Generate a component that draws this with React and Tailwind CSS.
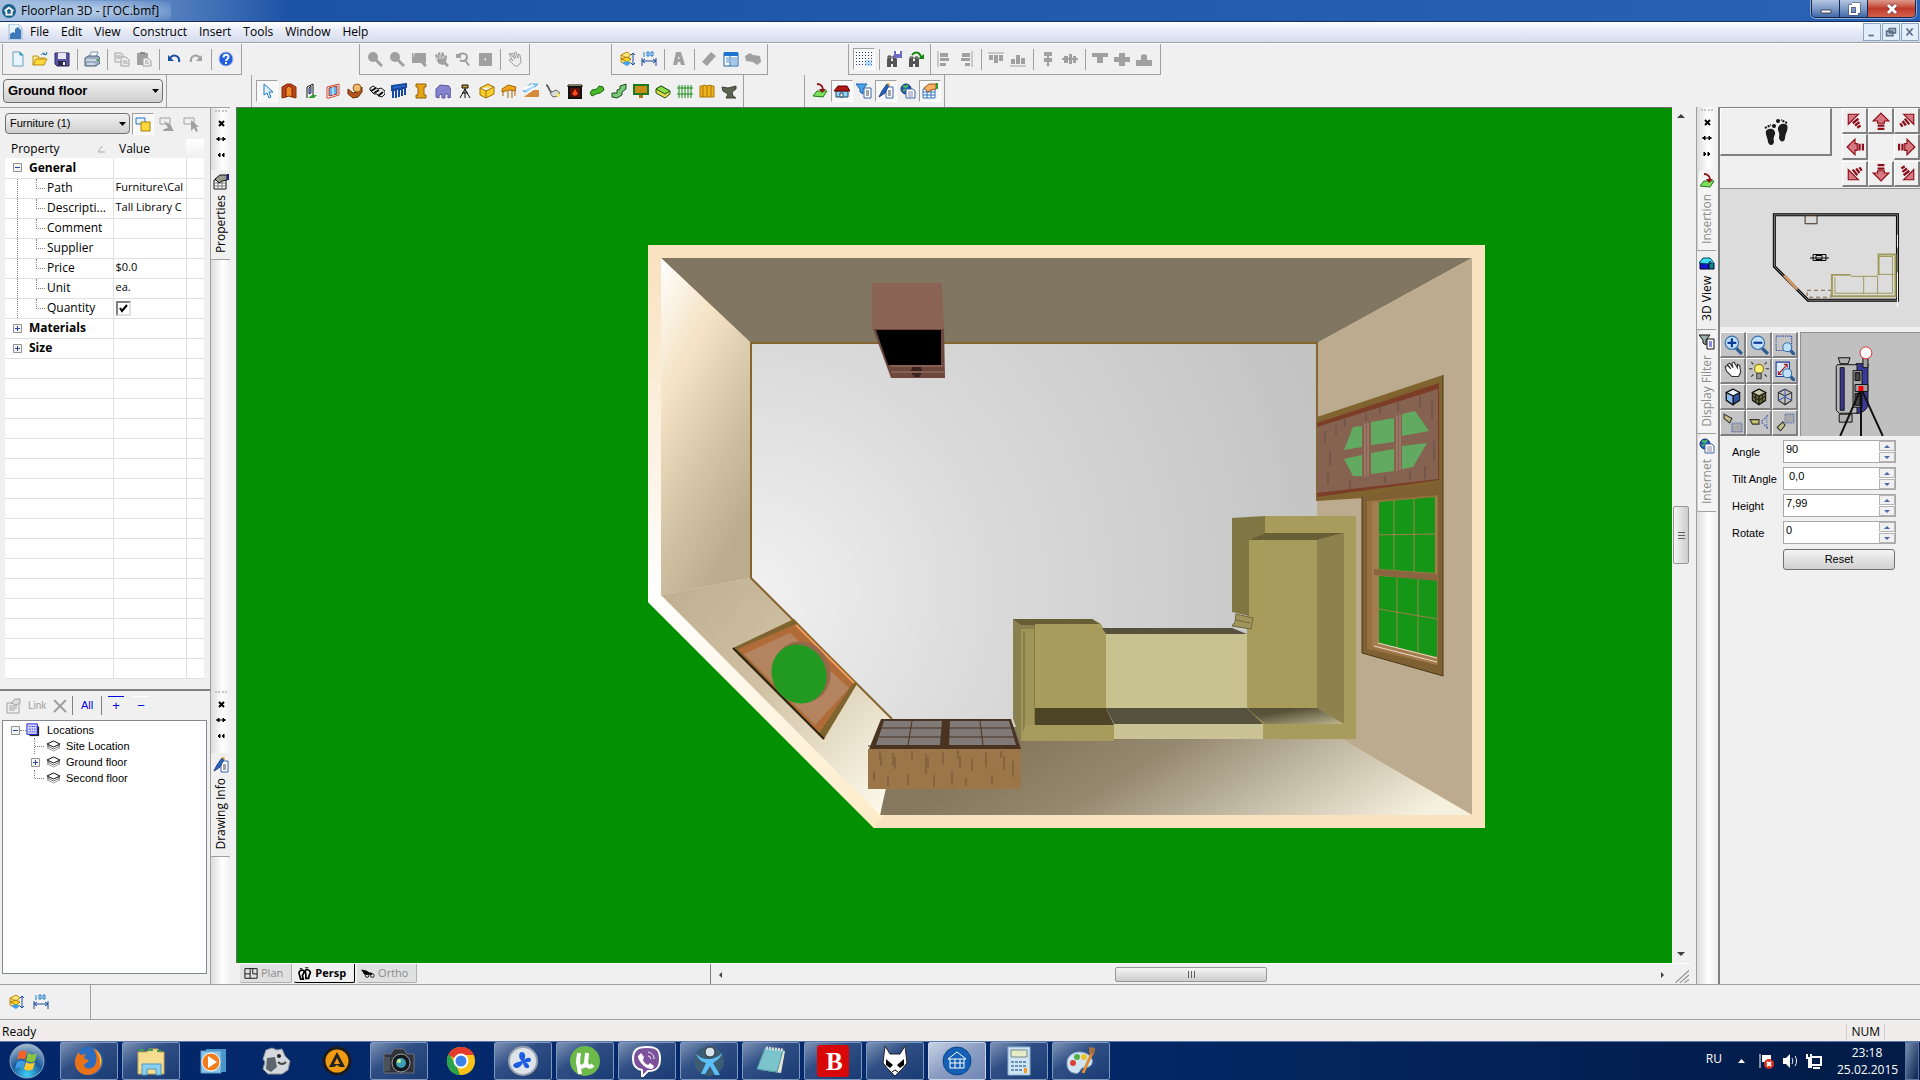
import React, { useState } from "react";

const G = "#a0a0a0";

const Svg = ({ size = "size-4", box = "0 0 16 16", children, className = "" }) => (
    <svg className={`${size} shrink-0 ${className}`} viewBox={box} fill="none">{children}</svg>
);

// Icônes des barres d'outils (grille 16 x 16)
const icons = {
    new: <><path d="M3 1h7l3 3v11H3z" fill="#e8f6ff" stroke="#6b9cbd" /><path d="M10 1v3h3" fill="#2aa5d8" stroke="#2a8fc0" /></>,
    open: <><path d="M1 14V5h5l1 2h6v2" fill="#ffe98a" stroke="#c09018" /><path d="M1 14l3-6h11l-3 6z" fill="#ffd83c" stroke="#b88a10" /><path d="M9 4c2-3 4-2 5 0m0 0l1-3m-1 3l-3-1" stroke="#1c6fb0" /></>,
    save: <><path d="M1 2h14v13H3l-2-2z" fill="#5a55a0" stroke="#2f2b66" /><path d="M4 2h8v6H4z" fill="#e8e8f4" /><path d="M4 10h8v5H4z" fill="#2c2c50" /><path d="M9 11h2v3H9z" fill="#fff" /></>,
    print: <><path d="M5 6l2-5h7l-2 5" fill="#f4faff" stroke="#8098b0" /><path d="M1 7l3-2h10l2 2v5l-4 3H1z" fill="#9aabc0" stroke="#52627a" /><path d="M2 9h10M3 13h8" stroke="#fff" /><path d="M13 9h2" stroke="#35a435" strokeWidth="2" /></>,
    copy: <><path d="M1 2h6l2 2v7H1z" fill="#eee" stroke={G} /><path d="M7 6h5l3 3v6H7z" fill="#eee" stroke={G} /><path d="M2 5h5M2 7h4M9 10h4M9 12h5" stroke={G} /></>,
    paste: <><path d="M1 2h11v12H1z" fill={G} /><path d="M7 7h5l3 3v5H7z" fill="#eee" stroke={G} /><path d="M4 1h5v2H4z" fill="#888" /><path d="M9 10h3M9 12h4" stroke={G} /></>,
    undo: <><path d="M4 7c3-4 10-3 9 4" stroke="#1a4fa0" strokeWidth="2" /><path d="M2 4v6h6z" fill="#1a4fa0" /></>,
    redo: <><path d="M12 7C9 3 2 4 3 11" stroke={G} strokeWidth="2" /><path d="M14 4v6H8z" fill={G} /></>,
    help: <><circle cx="8" cy="8" r="7" fill="#1d5fe0" stroke="#a9b8dc" /><path d="M5.500 6.500c0-4 5-3.500 5-.5 0 2-2.500 2-2.500 4M8 11v2" stroke="#fff" strokeWidth="2" /></>,
    zoomG: <><circle cx="6" cy="6" r="5" fill={G} /><path d="M9 9l6 6" stroke={G} strokeWidth="3" /></>,
    zoomWin: <><path d="M1 2h14v10H1z" fill={G} /><circle cx="8" cy="8" r="4" fill={G} /><path d="M10 10l5 5" stroke={G} strokeWidth="3" /><path d="M2 3h2M2 5h1" stroke="#eee" /></>,
    panG: <><path d="M3 8L2 4l2-1 1 2V2l2-1 1 4 1-4 2 1v4l1-2 2 1-1 6-3 3-4-1z" fill={G} /><path d="M4 6v3M7 4v4M10 5v3" stroke="#eee" /><path d="M10 10l5 5" stroke={G} strokeWidth="3" /></>,
    zoomPrev: <><path d="M3 5c2-4 9-3 9 1s-5 5-7 3" stroke={G} strokeWidth="2" /><path d="M1 3h5v4H1zM9 9h2l4 5-2 1z" fill={G} /></>,
    zoomAll: <><path d="M2 2h13v13H2z" fill={G} /><path d="M9 7v3l-2-2z" fill="#eee" /></>,
    hand: <path d="M3 2l5 6L4 3l2-1 3 5-2-5 2-1 2 6v-4l2 1 1 7-3 4H8L2 9l2-1 2 2L2 3z" stroke={G} fill="#eee" />,
    level: <><path d="M2 4l6-3 4 3-4 3z M2 4v7l6 3 4-3" stroke="#b88a10" fill="#ffe680" /><path d="M2 8l6-2 4 2-4 3z" fill="#ffd21f" stroke="#a67a08" /><path d="M3 12l5-2 4 2-4 3z" fill="#3f9ff0" /><path d="M14 2v12M12 4l2-2 2 2M12 12l2 2 2-2" stroke="#174f9e" /></>,
    dim: <><path d="M1 7v8M15 7v8M1 10h14M1 10l3-2M1 10l3 2M15 10l-3-2M15 10l-3 2" stroke="#1a4c9c" /><path d="M3 1v5M6 1h2v4H6zM10 1h2v4h-2z" stroke="#1a78d0" /></>,
    textA: <path d="M5 1h5l4 13h-4l-1-3H7l-1 3H2zM7 5v3h2z" fill={G} />,
    ruler: <path d="M1 11L10 1l5 4-9 10z" fill={G} />,
    list: <><path d="M1 2h14v13H1z" fill="#fff" stroke="#1760b0" /><path d="M1 1h14v4H1z" fill="#1f74d0" /><path d="M3 7h3M3 9h3M3 11h3M8 7h6M8 9h6M8 11h6M8 13h6" stroke="#4f8ac8" /><path d="M7 5v10" stroke="#1760b0" /></>,
    plane: <path d="M0 5l5-3 3 2 7 1 1 6-4 3-4-3-7-1z" fill={G} />,
    grid: <>{[1, 4, 7, 10, 13].map((y) => <path key={y} d={`M0 ${y}.5h16`} stroke="#2b3d60" strokeDasharray="1 2" />)}<path d="M9 9h7v6H9z" fill="#58b4ff" opacity=".4" /></>,
    find: <><path d="M1 8h4v2h2V8h4v8H7v-3H5v3H1z" fill="#555" /><path d="M2 5h3v3H2zM7 5h3v3H7z" fill="#888" stroke="#444" /><path d="M8 0h8v7H8z" fill="#6c6cc4" /><path d="M10 0h4v3h-4z" fill="#fff" /></>,
    findNext: <><path d="M1 8h4v2h2V8h4v8H7v-3H5v3H1z" fill="#555" /><path d="M2 6h3v2H2zM7 6h3v2H7z" fill="#aaa" stroke="#444" /><path d="M4 4c3-4 8-3 9 2" stroke="#14830f" strokeWidth="2" /><path d="M16 3v5h-6z" fill="#14830f" /></>,
    alL: <><path d="M2 0v16" stroke={G} /><path d="M4 2h8v4H4zM4 7h9v3H4zM4 12h6v3H4z" fill={G} /></>,
    alR: <><path d="M14 0v16" stroke={G} /><path d="M4 2h8v4H4zM3 7h9v3H3zM7 12h5v3H7z" fill={G} /></>,
    alT: <><path d="M0 2h16" stroke={G} /><path d="M1 4h4v5H1zM6 4h4v8H6zM11 4h4v6h-4z" fill={G} /></>,
    alB: <><path d="M0 15h16" stroke={G} /><path d="M1 8h4v5H1zM6 4h4v9H6zM11 7h4v6h-4z" fill={G} /></>,
    ceV: <path d="M4 1h8v4H9v2h3v4H9v2h1l-2 3-2-3h1v-2H4V7h3V5H4z" fill={G} />,
    ceH: <path d="M0 7h2V5h4v2h1V3h3v4h1V5h3v2h2v2h-2v3h-3V9h-1v4H7V9H6v3H2V9H0z" fill={G} />,
    exT: <path d="M0 2h16v4h-5v6H5V6H0z" fill={G} />,
    exM: <path d="M5 2h6v4h5v5h-5v4H5v-4H0V6h5z" fill={G} />,
    exB: <path d="M5 4h2V3h2v1h2v5h5v6H0V9h5z" fill={G} />,
    cursor: <path d="M5 1v11l3-2 2 5 2-1-2-5h4z" fill="#dff0ff" stroke="#1f7bc0" />,
    door: <><path d="M1 4l5-3h4l5 3v11l-4-1V5L8 3 5 5v9l-4 1z" fill="#b8441a" stroke="#8a2b08" /><path d="M5 5l3-2 3 2v9l-3-1-3 1z" fill="#f08a28" stroke="#8a2b08" /></>,
    door2: <><path d="M4 15V4l6-3v14" fill="#fff" stroke="#111" /><path d="M6 5l2-2v7l-2 1z" fill="#7cc8ff" stroke="#224" /><path d="M5 15l4-3h5l-3 3z" fill="#2ea22e" /></>,
    window: <><path d="M2 4l12-3v11L4 15H2z" fill="#fff" stroke="#d0452a" /><path d="M4 5l8-2v8l-8 2z" fill="#5fb4f4" stroke="#b03018" /><path d="M8 4v8" stroke="#fff" /></>,
    shape: <><path d="M1 6l5 4 5-1 4-5v5l-4 5-5 1-5-4z" fill="#b4561c" stroke="#6a2a08" /><circle cx="10" cy="5" r="4" fill="#f0bc6c" stroke="#9a5a1c" /></>,
    stairs: <><path d="M1 5l3-2 5 3 3-1 4 3v3l-3 3-3-1-2-2-3 0-4-4z" fill="#e8e8e8" stroke="#111" /><path d="M2 8l5-3M5 10l5-3M9 13l5-4" stroke="#111" strokeWidth="2" /></>,
    rail: <path d="M1 3l14-2v3L1 7zM2 6v9M5 6v9M8 5v9M11 5v8M14 4v8" fill="#2f6fd0" stroke="#1749a0" strokeWidth="2" />,
    column: <path d="M3 1h10v3h-2v8h2v3H3v-3h2V4H3z" fill="#e6a416" stroke="#8e6208" />,
    roof: <path d="M1 6l4-4 9 1 2 4v7l-3 1v-4h-3v4H7v-4l-3 1v3l-3-1z" fill="#8484d0" stroke="#5656a0" />,
    tripod: <path d="M5 2h6v3H5zM8 5v10M8 6L3 15M8 6l5 9M5 10h6" stroke="#111" fill="#c8a030" />,
    cabinet: <path d="M1 5l8-4 6 3v7l-8 4-6-3zM1 5l6 3 8-4M7 8v7" fill="#ffcf2e" stroke="#9a6f08" />,
    chair: <path d="M1 6l6-4 8 2-1 4-6-1-7 2zM2 8v5M7 8v7M11 7v8M14 7v6" fill="#f0a41c" stroke="#a56808" strokeWidth="1" />,
    floor: <><path d="M0 8L7 1h8L6 10z" fill="#a8d8f8" stroke="#58a8e0" /><path d="M1 14l8-7h7v7z" fill="#d88a3c" /><path d="M1 6l9-4M3 11l9-6" stroke="#fff" strokeWidth="2" /></>,
    lamp: <><path d="M1 2c3 0 3 8 7 8" stroke="#666" strokeWidth="2" /><path d="M5 10l6-3 4 3-2 3-5 1z" fill="#ddd" stroke="#666" /><circle cx="13" cy="12" r="2" fill="#f4e16a" /></>,
    fire: <><path d="M1 2h14v2H1z" fill="#ffe8a0" stroke="#111" /><path d="M2 4h12v11H2z" fill="#5a0e08" stroke="#111" strokeWidth="2" /><path d="M8 6l3 5-3 2-3-2z" fill="#ff4a1a" /></>,
    bush: <path d="M1 10l2-3 5-1 2-3 4 1 1 3-4 3-4 1-4 2z" fill="#48b828" stroke="#1d6a10" />,
    stair2: <path d="M1 14v-4h5V7l3-1V3l6-2v5l-4 3v3l-5 3z" fill="#78c878" stroke="#204f20" />,
    sign: <><path d="M1 2h14v9H1z" fill="#c88c18" stroke="#1e7a1e" strokeWidth="2" /><path d="M6 12h4v3H6z" fill="#b07818" /></>,
    bed: <><path d="M1 6l5-3 9 5v3l-5 4-9-5z" fill="#e8d850" stroke="#1c5a10" /><path d="M1 6l5-3 9 5-5 3z" fill="#8ddc48" stroke="#1c5a10" /></>,
    fence: <path d="M0 5h16M0 11h16M2 2v13M5 2v13M8 2v13M11 2v13M14 2v13" stroke="#1a8c1a" />,
    gate: <path d="M1 3h2l2-1 3 1 3-1 2 1h2v11H1zM4 3v11M8 3v11M12 3v11" fill="#f0b41c" stroke="#a87408" />,
    terrain: <path d="M1 4l6 1 8-2v3l-4 3 1 4 3 2H5l2-4-5-3z" fill="#5c6450" stroke="#3c4434" />,
    insert: <><path d="M1 13l4-5h10l-4 6z" fill="#7ee05a" stroke="#1c7a1c" /><path d="M5 1c4 0 6 3 6 6" stroke="#8c1414" strokeWidth="2" /><path d="M7 6h7l-4 4z" fill="#8c1414" /></>,
    house: <><path d="M2 8h12v6H2z" fill="#8cd4f8" stroke="#246" /><path d="M0 8l4-5h9l3 5z" fill="#b01818" stroke="#600" /><path d="M6 10h3v4H6z" fill="#fff" stroke="#246" /></>,
    house3d: <><path d="M1 8h9v6H1z" fill="#1414c8" stroke="#003" /><path d="M10 8h5v6h-5z" fill="#148484" stroke="#003" /><path d="M0 8l4-5h7l4 5-2 1-2-3-2 3z" fill="#3ce0f0" stroke="#046" /></>,
    filterBw: <><path d="M0 1h11L7 6v5L4 9V6z" fill="#9ab0a8" stroke="#111" /><path d="M8 5h7v10H8z" fill="#fff" stroke="#111" /><path d="M10 8h3M10 10h3M10 12h3" stroke="#1414c8" /></>,
    filter: <><path d="M0 1h11L7 6v5L4 9V6z" fill="#4aa4ee" stroke="#1a62b0" /><path d="M8 5h7v10H8z" fill="#fff" stroke="#3a62a8" /><path d="M10 8h3M10 10h3M10 12h3" stroke="#445" /></>,
    brush: <><path d="M8 4h7v11H8z" fill="#fff" stroke="#3a62a8" /><path d="M10 8h3M10 10h3M10 12h3" stroke="#445" /><path d="M1 14l3-6 5-7 2 1-4 8z" fill="#2a66c4" stroke="#183c80" /><path d="M9 1l1-1 2 1-1 2z" fill="#f09a20" /></>,
    globe: <><circle cx="6" cy="6" r="5" fill="#2456c0" stroke="#143074" /><path d="M3 3l3 1 2-2M3 8l3-2" stroke="#4cc04c" strokeWidth="2" /><path d="M6 6h7l2 2v7H6z" fill="#fff" stroke="#3a62a8" /><path d="M8 9h5M8 11h5M8 13h5" stroke="#88a" /></>,
    props: <><path d="M1 6h12v9H1z" fill="#fff" stroke="#2f72c0" /><path d="M1 9h12M1 12h12M5 6v9M9 6v9" stroke="#2f72c0" /><path d="M2 5l5-4h7v5l-5 1-3 2z" fill="#f4b064" stroke="#a0521c" /><path d="M15 0v6" stroke="#2e9a2e" strokeWidth="2" /></>,
    propsBw: <><path d="M1 6h12v9H1z" fill="#fff" stroke="#111" /><path d="M1 9h12M1 12h12M5 6v9M9 6v9" stroke="#777" /><path d="M2 5l5-4h7v5l-5 1-3 2z" fill="#9a9a8c" stroke="#111" /><path d="M15 0v6" stroke="#1c1c8c" strokeWidth="2" /></>,
};

function Tool({ name, pressed, wide }) {
    return (
        <button
            type="button"
            aria-label={name}
            className={`flex h-[22px] ${wide ? "w-[25px]" : "w-[22px]"} shrink-0 items-center justify-center ${pressed ? "border border-[#a0a0a0] border-r-white border-b-white bg-[#f8f8f8]" : ""}`}
        >
            <Svg>{icons[name]}</Svg>
        </button>
    );
}

// "|" place un séparateur, "*" indique un bouton enfoncé
function ToolGroup({ items, className }) {
    return (
        <div className={`flex shrink-0 items-center border-r border-[#a0a0a0] ${className}`}>
            {items.split(" ").map((it, i) =>
                it === "|" ? (
                    <span key={i} className="flex w-2 shrink-0 justify-center"><span className="h-[21px] border-l border-[#a0a0a0]" /></span>
                ) : (
                    <Tool key={i} name={it.replace("*", "")} pressed={it.includes("*")} />
                )
            )}
        </div>
    );
}

function Combo({ value, className, label }) {
    return (
        <div className={`relative ${className}`}>
            <select aria-label={label} className="size-full appearance-none rounded-sm border border-[#707070] bg-linear-to-b from-[#f2f2f2] to-[#cfcfcf] pl-1">
                <option>{value}</option>
            </select>
            <svg className="pointer-events-none absolute top-1/2 right-1 h-1 w-[7px] -translate-y-1/2" viewBox="0 0 7 4"><path d="M0 0h7L3.500 4z" fill="#000" /></svg>
        </div>
    );
}

function TitleBar() {
    return (
        <header className="flex h-[21px] shrink-0 items-center bg-linear-to-r from-[#a5c0e0] via-[#1b53a6] via-15% to-[#2a62b4] pl-[2px]">
            <div className="flex items-center gap-[5px] bg-radial from-[#b9cfe8] to-transparent pr-3">
                <Svg size="size-[14px]"><circle cx="8" cy="8" r="8" fill="#1f628e" /><path d="M3 8l5-4 5 4M5 8v4h6V8" stroke="#fff" strokeWidth="2" /></Svg>
                <h1 className="text-[12px] leading-5 text-black">FloorPlan 3D - [ГОС.bmf]</h1>
            </div>
            <div className="mr-1 ml-auto flex h-[18px] self-start overflow-hidden rounded-b-[5px] border border-t-0 border-[#16284e] ring-1 ring-[#8aa9d6]">
                <button type="button" aria-label="Minimize" className="flex w-7 items-center justify-center border-r border-[#16284e] bg-linear-to-b from-[#b4c6e2] via-[#7f9bc8] via-50% to-[#4168a8]">
                    <Svg size="h-4 w-4"><path d="M3 9h10v3H3z" fill="#fff" stroke="#445" /></Svg>
                </button>
                <button type="button" aria-label="Restore" className="flex w-7 items-center justify-center border-r border-[#16284e] bg-linear-to-b from-[#b4c6e2] via-[#7f9bc8] via-50% to-[#4168a8]">
                    <Svg size="h-4 w-4"><path d="M6 3h7v8h-2M4 5h7v8H4z" stroke="#445" strokeWidth="3" /><path d="M6 3h7v8h-2M4 5h7v8H4z" stroke="#fff" strokeWidth="2" /></Svg>
                </button>
                <button type="button" aria-label="Close" className="flex w-[47px] items-center justify-center bg-linear-to-b from-[#dc9a8c] via-[#c0392a] via-50% to-[#d2604a]">
                    <Svg size="h-4 w-4"><path d="M4 4l8 8M12 4l-8 8" stroke="#533" strokeWidth="4" /><path d="M4 4l8 8M12 4l-8 8" stroke="#fff" strokeWidth="3" /></Svg>
                </button>
            </div>
        </header>
    );
}

function MenuBar() {
    return (
        <nav className="flex h-[22px] shrink-0 items-center border-t border-b border-t-[#1b2f5c] border-b-[#a0a0a0] bg-linear-to-b from-white via-[#e9edf7] via-40% to-[#d6dcee] pl-2">
            <Svg className="mr-[6px]"><path d="M1 0h9l4 4v12H1z" fill="#e8f2fc" stroke="#9ab4d4" /><path d="M2 15V10l3-2 2 1V5l3-2 3 3v9z" fill="#3d78b8" /></Svg>
            {["File", "Edit", "View", "Construct", "Insert", "Tools", "Window", "Help"].map((m) => (
                <button type="button" key={m} className="mr-3 text-[12px] leading-5">{m}</button>
            ))}
            <div className="mr-[1px] ml-auto flex gap-[1px]">
                {["M4 12h6", "M6 4h7v5H6zM3 7h7v5H3z", "M4 4l7 8M11 4l-7 8"].map((d, i) => (
                    <button type="button" key={d} aria-label={["Minimize drawing", "Restore drawing", "Close drawing"][i]} className="flex h-[18px] w-[18px] items-center justify-center border border-[#8ea3bd] bg-[#e2eefa]">
                        <Svg size="size-[14px]"><path d={d} stroke="#5c7088" strokeWidth="2" /></Svg>
                    </button>
                ))}
            </div>
        </nav>
    );
}

function StripButtons({ right }) {
    const ds = ["M6 6l5 5M11 6l-5 5", "M3 8h10M6 6L4 8l2 2zM10 6l2 2-2 2z", right ? "M5 6l2 2-2 2zM9 6l2 2-2 2z" : "M7 6L5 8l2 2zM11 6L9 8l2 2z"];
    return (
        <div className="flex flex-col items-center">
            <span className="mt-[2px] h-[2px] w-3 border-t-2 border-dotted border-[#c4c4c4]" />
            <div className="flex flex-col pt-[3px] pb-[3px]">
                {ds.map((d, i) => (
                    <button type="button" key={d} aria-label={["Close", "Resize", "Collapse"][i]}><Svg><path d={d} stroke="#000" strokeWidth={i === 0 ? 2 : 1} fill={i === 0 ? "none" : "#000"} /></Svg></button>
                ))}
            </div>
        </div>
    );
}

function SideTab({ icon, label, active, className }) {
    return (
        <button type="button" className={`flex w-full flex-col items-center border-b border-[#a0a0a0] pt-1 text-[12px] leading-5 ${active ? "bg-[#f0f0f0] text-black" : "rounded-tl-md border-l border-l-[#d0d0d0] bg-[#f4f4f4] text-[#8c8c8c]"} ${className}`}>
            <Svg>{icons[icon]}</Svg>
            <span className="mt-[5px] rotate-180 whitespace-nowrap [writing-mode:vertical-rl]">{label}</span>
        </button>
    );
}

const strip = "w-5 shrink-0 border-l border-[#a0a0a0] bg-linear-to-r from-[#dcdcdc] via-white via-60% to-[#f0f0f0]";

const rows = [
    { name: "General", head: true, open: true },
    { name: "Path", value: "Furniture\\Cal" },
    { name: "Descripti...", value: "Tall Library C" },
    { name: "Comment" },
    { name: "Supplier" },
    { name: "Price", value: "$0.0" },
    { name: "Unit", value: "ea." },
    { name: "Quantity", check: true },
    { name: "Materials", head: true },
    { name: "Size", head: true },
    ...Array.from({ length: 16 }, () => ({})),
];

const Box = ({ open }) => (
    <svg className="size-[9px] shrink-0" viewBox="0 0 9 9"><path d="M.5.5h8v8h-8z" fill="#f4f4f4" stroke="#919191" /><path d={open ? "M2 4.500h5" : "M2 4.500h5M4.500 2v5"} stroke="#26479c" /></svg>
);

function PropertiesPanel() {
    const [quantity, setQuantity] = useState(true);

    return (
        <section className="flex min-h-0 flex-1">
            <div className="min-w-0 flex-1 overflow-hidden pr-[6px] pl-[5px]">
                <div className="flex h-[31px] items-center">
                    <Combo label="Object type" value="Furniture (1)" className="h-[21px] w-[125px] font-['Liberation_Sans',sans-serif] text-[11px]" />
                    <div className="ml-[2px] flex gap-[2px]">
                        <button type="button" aria-label="Link view" className="flex size-[22px] items-center justify-center border border-[#a0a0a0] border-r-white border-b-white bg-[#f8f8f8]">
                            <Svg><path d="M1 2h9v6H1z" fill="#e8f4ff" stroke="#2a72c0" /><path d="M6 6h9v9H6z" fill="#ffd83c" stroke="#a88008" /></Svg>
                        </button>
                        <button type="button" aria-label="Apply" className="flex size-[22px] items-center justify-center"><Svg><path d="M1 2h10v6H1z" stroke={G} /><path d="M5 5l7 4 1 3 2 3H4l1-2 4-1z" fill={G} /></Svg></button>
                        <button type="button" aria-label="Pick" className="flex size-[22px] items-center justify-center"><Svg><path d="M1 2h10v6H1z" stroke={G} /><path d="M8 4v11l3-3 2 4 2-1-2-4h3z" fill={G} /></Svg></button>
                    </div>
                </div>
                <table className="w-full table-fixed border-collapse bg-white text-[12px] leading-[18px]">
                    <thead>
                        <tr className="h-[19px] bg-[#f0f0f0] text-left">
                            <th className="w-[108px] p-0 pl-[6px] font-normal"><span className="flex items-center justify-between pr-2">Property <svg className="h-2 w-[7px]" viewBox="0 0 7 8"><path d="M0 7l4-6M0 7h7" stroke="#aaa" fill="none" /></svg></span></th>
                            <th className="w-[73px] p-0 pl-[6px] font-normal">Value</th>
                            <th aria-label="More" className="bg-linear-to-b from-white to-[#f0f0f0] p-0" />
                        </tr>
                    </thead>
                    <tbody>
                        {rows.map((r, i) => (
                            <tr key={i} className="h-5 border-b border-[#e0e0e0]">
                                <td className="border-r border-[#e0e0e0] p-0">
                                    {r.head && (
                                        <div className="flex items-center gap-[7px] pl-2 font-bold"><Box open={r.open} />{r.name}</div>
                                    )}
                                    {r.name && !r.head && (
                                        <div className="flex pl-3">
                                            <span className="h-[19px] w-[19px] border-l border-dotted border-[#808080]" />
                                            <span className="h-[10px] w-[9px] border-b border-l border-dotted border-[#808080]" />
                                            <span className="pl-[2px] whitespace-nowrap">{r.name}</span>
                                        </div>
                                    )}
                                </td>
                                <td className="border-r border-[#e0e0e0] p-0 pl-[2px]">
                                    {r.check ? (
                                        <div className="relative size-[15px]">
                                            <input type="checkbox" aria-label="Quantity" checked={quantity} onChange={(e) => setQuantity(e.target.checked)} className="block size-[15px] appearance-none border-2 border-[#808080] border-r-[#e0e0e0] border-b-[#e0e0e0] bg-white" />
                                            {quantity && <svg className="pointer-events-none absolute inset-0" viewBox="0 0 15 15"><path d="M4 7l2 3 5-6" stroke="#000" strokeWidth="2" fill="none" /></svg>}
                                        </div>
                                    ) : (
                                        <div className="h-[19px] text-[11px] leading-4 whitespace-nowrap">{r.value}</div>
                                    )}
                                </td>
                                <td className="p-0" />
                            </tr>
                        ))}
                    </tbody>
                </table>
            </div>
            <div className={strip}>
                <StripButtons />
                <SideTab icon="propsBw" label="Properties" active className="mt-1 h-[90px]" />
            </div>
        </section>
    );
}

const Layers = () => (
    <Svg size="h-3 w-[15px]" box="0 0 15 12"><path d="M1 8l6.500-3L14 8l-6.500 3z" fill="#fff" stroke="#aaa" /><path d="M1 6l6.500-3L14 6 7.500 9z" fill="#fff" stroke="#777" /><path d="M1 4l6.500-3L14 4 7.500 7z" fill="#fff" stroke="#111" /></Svg>
);

function DrawingInfo() {
    return (
        <section className="flex h-[295px] shrink-0">
            <div className="flex min-w-0 flex-1 flex-col border-t-2 border-[#808080] pr-[3px] pb-[10px] pl-[2px]">
                <div className="flex h-[29px] shrink-0 items-center font-['Liberation_Sans',sans-serif] text-[11px]">
                    <button type="button" aria-label="Edit" className="ml-1"><Svg><path d="M1 5h12v10H1zM3 8h8M3 10h8M3 12h6" stroke={G} /><path d="M5 5l4-4h5v4l-4 2z" fill="#ddd" stroke={G} /></Svg></button>
                    <button type="button" className="ml-[6px] w-[18px] text-[10px] text-[#a0a0a0]">Link</button>
                    <button type="button" aria-label="Delete" className="ml-[6px]"><Svg><path d="M2 2l12 12M14 2L2 14" stroke={G} strokeWidth="2" /></Svg></button>
                    <span className="ml-1 h-[19px] border-l border-[#808080]" />
                    <button type="button" className="ml-[7px] w-[14px] text-[11px] text-[#0000e0]">All</button>
                    <span className="ml-[7px] h-[19px] border-l border-[#808080]" />
                    <button type="button" className="ml-[6px] h-[19px] w-4 border-t border-[#0000e0] text-[13px] leading-4 text-[#0000e0]">+</button>
                    <button type="button" className="ml-[9px] h-[19px] w-4 border-t border-white text-[13px] leading-4 text-[#0000e0]">−</button>
                </div>
                <ul className="flex-1 border border-[#828790] bg-white pt-[1px] pl-2 font-['Liberation_Sans',sans-serif] text-[11px] leading-4">
                    <li>
                        <div className="flex items-center">
                            <Box open />
                            <span className="w-[6px] border-t border-dotted border-[#808080]" />
                            <Svg size="size-[14px]" className="mr-[7px]"><path d="M4 4h11v11H4z" fill="#222" /><path d="M1 1h12v12H1z" fill="#d4d4ff" stroke="#1414d0" /><path d="M3 4h9M3 7h9M3 10h9" stroke="#1414d0" strokeDasharray="1 1" /></Svg>
                            Locations
                        </div>
                        <ul className="ml-[19px]">
                            {["Site Location", "Ground floor", "Second floor"].map((t, i) => (
                                <li key={t} className="flex items-center">
                                    <span className={`w-[5px] ${i === 2 ? "h-2 self-start" : "h-4"} ${i === 1 ? "border-0" : "border-r border-dotted border-[#808080]"}`} />
                                    {i === 1 ? <span className="flex w-[9px] -translate-x-1"><Box /></span> : <span className="w-[9px] border-t border-dotted border-[#808080]" />}
                                    <span className="mr-[5px] flex pl-[2px]"><Layers /></span>
                                    {t}
                                </li>
                            ))}
                        </ul>
                    </li>
                </ul>
            </div>
            <div className={strip}>
                <StripButtons />
                <SideTab icon="brush" label="Drawing Info" active className="mt-[6px] h-[104px]" />
            </div>
        </section>
    );
}

const grain = "M12 2v9M13 7v10M25 4v13M27 8v12M44 2v8M58 5v20M60 9v9M75 3v12M90 1v9M92 7v12M104 10v12M118 3v15M133 2v7M136 7v14M145 12v16M6 22v10M20 28v9M40 25v11M66 26v12M84 22v14M98 29v8M124 26v9";

function Scene() {
    return (
        <svg className="absolute inset-0 size-full bg-[#009000]" viewBox="237 107 1435 855">
            <defs>
                <linearGradient id="rimL" x1="0" y1="0" x2="0" y2="1">
                    <stop offset="0" stopColor="#f9e2c0" /><stop offset="1" stopColor="#fff" />
                </linearGradient>
                <linearGradient id="rimD" x1="0" y1="0" x2="1" y2="1">
                    <stop offset="0" stopColor="#fff" /><stop offset="1" stopColor="#fdebc6" />
                </linearGradient>
                <linearGradient id="left" x1="0" y1="0" x2=".5" y2="1">
                    <stop offset="0" stopColor="#fff" /><stop offset=".35" stopColor="#f4e3c4" /><stop offset=".7" stopColor="#d2c3a5" /><stop offset="1" stopColor="#bcac8e" />
                </linearGradient>
                <linearGradient id="diag" x1="0" y1="0" x2="1" y2="1">
                    <stop offset="0" stopColor="#bfae90" /><stop offset=".45" stopColor="#d0c1a4" /><stop offset="1" stopColor="#fffdee" />
                </linearGradient>
                <linearGradient id="bottom" gradientUnits="userSpaceOnUse" x1="1040" y1="730" x2="1180" y2="960">
                    <stop offset="0" stopColor="#85785f" /><stop offset=".3" stopColor="#94886f" /><stop offset="1" stopColor="#f6f1de" />
                </linearGradient>
                <radialGradient id="floor" gradientUnits="userSpaceOnUse" cx="755" cy="590" r="600">
                    <stop offset="0" stopColor="#f1f1f1" /><stop offset=".4" stopColor="#dadada" /><stop offset="1" stopColor="#c2c2c2" />
                </radialGradient>
                <linearGradient id="fold" x1="0" y1="0" x2="1" y2="1">
                    <stop offset=".3" stopColor="#59523a" /><stop offset="1" stopColor="#bcb58c" />
                </linearGradient>
            </defs>

            {/* Murs */}
            <path d="M648 244H1485V827H874L648 601z" fill="#f9e2c0" />
            <path d="M648 257h13V600h-13z" fill="url(#rimL)" />
            <path d="M648 601V594H661L884 814 874 827z" fill="url(#rimD)" />
            <path d="M661 257H1472L1317 342H751z" fill="#817661" />
            <path d="M1472 257V814L1317 724V342z" fill="#bcab8e" />
            <path d="M880 814H1472L1317 724H892z" fill="url(#bottom)" />
            <path d="M661 257L751 342V577L661 594z" fill="url(#left)" />
            <path d="M661 594L751 577 892 718V760L880 814z" fill="url(#diag)" />
            <path d="M751 342H1317V726H900L751 577z" fill="url(#floor)" />
            <path d="M1317 500V342H751V577L892 718" fill="none" stroke="#866630" strokeWidth="2" />

            {/* Bibliothèque */}
            <path d="M873 328H944L945 377H891z" fill="#6f483d" />
            <path d="M872 282H942L944 328H872z" fill="#8a6355" />
            <path d="M876 329H941V364H888z" />
            <path d="M890 365H943M891 371H944" stroke="#a07468" />
            <path d="M912 367h9M911 369h11M912 373h9M914 375h6" stroke="#000" fill="none" />

            {/* Porte de droite */}
            <path d="M1317 416L1443 374V492L1317 500z" fill="#80642f" />
            <path d="M1317 422L1439 382V479L1317 496z" fill="#7b3c28" />
            <path d="M1317 426L1438 388V478L1317 492z" fill="#866350" />
            <path d="M1325 430v12M1330 450v15M1336 425v9M1345 418v8M1350 480v8M1366 412v8M1380 406v7M1398 402v8M1420 395v12M1432 400v18M1434 440v20M1385 475v7M1410 470v8M1328 472v12M1425 465v12" stroke="#75564a" strokeWidth="2" />
            <path d="M1365 423V476M1368 422V475M1397 415V470M1400 414V469" stroke="#b28a78" />
            <path d="M1353 426L1362 425V446L1344 449zM1371 421L1394 417V441L1371 444zM1402 413L1415 410 1429 430 1402 435zM1344 458L1362 454V475H1353zM1371 452L1394 448V470L1371 473zM1402 445L1427 442 1413 466 1402 468z" fill="#62aa62" />

            {/* Fenêtre */}
            <path d="M1362 496L1443 481V675L1362 652z" fill="#7e6032" />
            <path d="M1367 500L1438 494V664L1367 648z" fill="#96703f" />
            <path d="M1372 501L1437 496V664L1372 646z" fill="#a47c50" />
            <path d="M1379 501L1435 496V572L1379 568zM1379 575L1437 579V656L1379 642z" fill="#169616" />
            <path d="M1394 500V569M1414 498V571M1373 534L1435 533M1397 577V646M1418 578V651M1379 608L1437 618" stroke="#a08050" />
            <path d="M1374 568L1437 573V580L1374 574z" fill="#8a6640" />
            <path d="M1374 645L1437 661M1378 642L1437 657" stroke="#eadcc4" />
            <path d="M1362 652L1443 675V374M1362 496V652" stroke="#4a381a" fill="none" />

            {/* Porte de la cloison oblique */}
            <path d="M733 647L794 618 857 683 824 738z" fill="#80642f" />
            <path d="M738 648L796 623 854 681 819 732z" fill="#b06c38" />
            <path d="M744 653L790 632 849 687 815 724z" fill="#b48460" />
            <path d="M733 647L824 738" stroke="#2c2008" strokeWidth="2" />
            <path d="M796 624L854 682" stroke="#f09c58" strokeWidth="2" />
            <ellipse cx="802" cy="671" rx="28" ry="31" transform="rotate(-25 802 671)" fill="#946848" />
            <ellipse cx="799" cy="673" rx="27" ry="30" transform="rotate(-25 799 673)" fill="#229a22" />

            {/* Canapé d'angle */}
            <path d="M1013 618H1092L1101 623V628H1021V740L1013 718z" fill="#8a8150" />
            <path d="M1013 618H1092L1101 624H1021z" fill="#665f36" />
            <path d="M1021 628H1035V740H1021z" fill="#a1965a" />
            <path d="M1024 630V738M1035 624V723" stroke="#6f673c" />
            <path d="M1035 623H1101L1106 633V707H1035z" fill="#a89c5c" />
            <path d="M1035 707H1106L1114 724H1035z" fill="#4e4526" />
            <path d="M1025 724H1114V740H1021z" fill="#a89c5c" />
            <path d="M1102 627H1232L1247 633H1106z" fill="#55513d" />
            <path d="M1106 633H1247V707H1106z" fill="#c8c190" />
            <path d="M1106 707H1247L1265 723H1114z" fill="#57523e" />
            <path d="M1114 723H1265V738H1114z" fill="#cac395" />
            <path d="M1265 515H1356V738H1263V723L1247 707V539z" fill="#a89c5c" />
            <path d="M1232 517L1265 515V532L1249 539V615L1232 611z" fill="#7f7644" />
            <path d="M1265 532H1344L1317 539H1249z" fill="#685f36" />
            <path d="M1317 539L1344 532V723L1317 707z" fill="#8d824e" />
            <path d="M1247 707H1317L1344 723H1265z" fill="url(#fold)" />
            <path d="M1236 613l17 4-2 11-19-3 3-4z" fill="#a0955a" stroke="#6f673c" />
            <path d="M1236 619l14 3" stroke="#6f673c" />

            {/* Meuble vitré */}
            <path d="M881 718H1011L1021 748H869z" fill="#4a3320" />
            <path d="M884 720H942L940 744H876zM950 720H1009L1016 744H949z" fill="#7f7977" />
            <path d="M881 727H1011M879 736H1014M912 720L908 744M980 720L983 744M868 745H1020" stroke="#4a3320" />
            <path d="M868 748H1021V788H868z" fill="#9b7648" />
            <path d={grain} transform="translate(868 748)" stroke="#866440" strokeWidth="2" />
        </svg>
    );
}

function Viewport() {
    const [tab, setTab] = useState("Persp");
    const tabs = [
        ["Plan", <path d="M1 3h14v11H1zM1 9h6M7 3v11M10 3v6h5" stroke="#000" />],
        ["Persp", <><path d="M3 5c-3 2-2 4-1 6l1 4h3l-1-4 2-4c0-2-2-3-4-2zM10 4c-2 0-2 3-1 5v5h3l1-4c2-2 1-6-3-6z" fill="#fff" stroke="#000" strokeWidth="2" /><path d="M2 3h3M8 2h4" stroke="#000" /></>],
        ["Ortho", <><path d="M0 4l6 1 3 2 4 1-1 2H4z" fill="#000" /><circle cx="7" cy="11" r="2" stroke="#000" /><circle cx="13" cy="11" r="2" stroke="#000" /></>],
    ];

    return (
        <main className="flex min-w-0 flex-1 flex-col">
            <div className="flex min-h-0 flex-1">
                <div className="relative min-w-0 flex-1 border-t border-l border-[#696969]"><Scene /></div>
                <div className="flex w-[18px] shrink-0 flex-col items-center bg-[#f0f0f0]">
                    <button type="button" aria-label="Scroll up" className="flex h-[18px] items-center"><Svg size="size-2" box="0 0 8 8"><path d="M0 6h8L4 2z" fill="#404040" /></Svg></button>
                    <div className="flex min-h-0 w-full flex-1 flex-col items-center px-[1px]">
                        <div className="basis-[381px]" />
                        <div className="flex h-[58px] w-full shrink-0 items-center justify-center rounded-xs border border-[#979797] bg-linear-to-r from-[#f5f5f5] to-[#cdcdcd]"><span className="h-[7px] w-[7px] border-y border-[#606060]"><span className="mt-[2px] block border-t border-[#606060]" /></span></div>
                    </div>
                    <button type="button" aria-label="Scroll down" className="flex h-[18px] items-center"><Svg size="size-2" box="0 0 8 8"><path d="M0 2h8L4 6z" fill="#404040" /></Svg></button>
                </div>
            </div>
            <div className="flex h-[21px] shrink-0 border-t border-white">
                <div className="flex w-[475px] items-start border-r border-[#808080] pl-1" role="tablist">
                    {tabs.map(([name, art]) => (
                        <button
                            type="button"
                            role="tab"
                            aria-selected={tab === name}
                            key={name}
                            onClick={() => setTab(name)}
                            className={`mr-[2px] flex h-[19px] items-center gap-[3px] rounded-b-xs border-r border-b pr-2 pl-1 text-[11px] leading-4 ${tab === name ? "border-black bg-[#f0f0f0] font-bold text-black" : "border-[#b0b0b0] bg-[#e0e0e0] text-[#8c8c8c]"}`}
                        >
                            <Svg size="size-[14px]">{art}</Svg>
                            {name}
                        </button>
                    ))}
                </div>
                <div className="flex min-w-0 flex-1 items-center pt-[2px]">
                    <button type="button" aria-label="Scroll left" className="flex w-[18px] justify-center"><Svg size="size-2" box="0 0 8 8"><path d="M6 1v6L3 4z" fill="#404040" /></Svg></button>
                    <div className="flex h-4 min-w-0 flex-1">
                        <div className="basis-[386px]" />
                        <div className="flex h-[15px] w-[152px] shrink-0 items-center justify-center rounded-xs border border-[#979797] bg-linear-to-b from-[#f5f5f5] to-[#cdcdcd]"><span className="flex h-[7px] w-[7px] justify-center border-x border-[#606060]"><span className="border-l border-[#606060]" /></span></div>
                    </div>
                    <button type="button" aria-label="Scroll right" className="flex w-[18px] justify-center"><Svg size="size-2" box="0 0 8 8"><path d="M2 1v6l3-3z" fill="#404040" /></Svg></button>
                </div>
                <Svg size="h-[18px] w-[18px]" className="mt-[2px]"><path d="M3 15L15 4M7 15l8-7M11 15l4-3" stroke="#909090" /></Svg>
            </div>
        </main>
    );
}

const raised = "border-t border-l border-r-2 border-b-2 border-t-white border-l-white border-r-[#808080] border-b-[#808080]";

function Arrow({ angle, diag }) {
    return (
        <Svg size="size-[18px]">
            <g transform={`rotate(${angle} 8 8)`} fill="#d87880" stroke="#8c0c18">
                {diag ? <><path d="M2 2h9l-3 3-3 3-3 3z" /><path d="M11 6l-5 4M12 9l-4 3M13 12l-3 2" strokeWidth="2" /></> : <><path d="M8 1l7 7h-4v2H5V8H1z" /><path d="M5 12h6M5 15h6" strokeWidth="2" /></>}
            </g>
        </Svg>
    );
}

const lens = (x, y) => <><path d={`M${x + 3} ${y + 3}l5 5`} stroke="#2c5c90" strokeWidth="3" /><circle cx={x} cy={y} r="4" fill="#bfe0fa" stroke="#3a70a8" /></>;
const cube = "M9 2l6 3v7l-6 4-6-4V5zM3 5l6 3 6-3M9 8v8";

const viewTools = [
    ["Zoom in", <>{lens(9, 9)}<circle cx="8" cy="7" r="6" fill="#bfe0fa" stroke="#3a70a8" /><path d="M4 7h8M8 3v8" stroke="#123c98" strokeWidth="2" /></>],
    ["Zoom out", <>{lens(9, 9)}<circle cx="8" cy="7" r="6" fill="#bfe0fa" stroke="#3a70a8" /><path d="M4 7h8" stroke="#123c98" strokeWidth="2" /></>],
    ["Zoom window", <><path d="M1 1h14v13H1z" stroke="#1f3fa0" strokeDasharray="1 1" />{lens(11, 11)}</>],
    ["Pan", <path d="M2 5l2-1 3 3-3-4 2-1 3 4-1-4 2-1 3 5 0-3 2 1 1 6-2 4H8L3 9z" fill="#fff" stroke="#333" />],
    ["Light", <><circle cx="9" cy="7" r="4" fill="#fff07a" stroke="#8a7a10" /><path d="M7 11h4v5H7z" fill="#999" stroke="#444" /><path d="M0 7h3M15 7h3M2 1l2 2M16 1l-2 2M2 14l2-2M16 14l-2-2" stroke="#333" /></>],
    ["Zoom extents", <><path d="M1 1h12v13H1z" fill="#dcecfa" stroke="#1f3fa0" /><path d="M3 12l8-9M8 3h3v3M3 9v3h3" stroke="#9c1c1c" />{lens(11, 11)}</>],
    ["Shaded", <><path d={cube} fill="#3454a4" stroke="#111" /><path d="M3 5l6-3 6 3-6 3z" fill="#e8f4ff" stroke="#111" /><path d="M3 5l6 3v8l-6-4z" fill="#8cbcf0" stroke="#111" /></>],
    ["Textured", <><path d={cube} fill="#6c6c34" stroke="#111" /><path d="M3 5l6-3 6 3-6 3z" fill="#c8c8a8" stroke="#111" /><path d="M3 8l6 4 6-4M6 7v7M12 7v7" stroke="#222" /></>],
    ["Wireframe", <><path d={cube} stroke="#333" /><path d="M9 2v8M3 12l6-3 6 3" stroke="#4464b8" /></>],
    ["View from top left", <><path d="M1 1l7 4-2 4-5-4z" fill="#c8c488" stroke="#333" /><path d="M8 9h9v8H8z" fill="#aaa" stroke="#4464b8" strokeDasharray="1 1" /></>],
    ["View from left", <><path d="M1 6h8v4H3z" fill="#c8c468" stroke="#333" /><path d="M17 2l-6 6 6 6" stroke="#4464b8" strokeDasharray="2 1" /><path d="M16 4v9" stroke="#4464b8" strokeDasharray="1 1" /></>],
    ["View from bottom", <><path d="M2 13l5-5 2 3-4 5z" fill="#c8c488" stroke="#333" /><path d="M9 1h8v8H9z" fill="#aaa" stroke="#4464b8" strokeDasharray="1 1" /></>],
];

function MiniPlan() {
    return (
        <div className="mt-px h-[139px] border-t border-[#909090] bg-[#dcdcdc]">
            <svg className="h-full w-full" viewBox="1720 188 200 139" fill="none">
                <path d="M1774 214H1898V300H1808L1774 266z" stroke="#000" strokeWidth="3" />
                <path d="M1774 214H1898V300H1808L1774 266z" stroke="#888" />
                <path d="M1805 215h12v8h-12z" fill="#dcdcdc" stroke="#3c281c" />
                <path d="M1810 257.500h19M1813 254h13v6h-13zM1816 255h6v4h-6z" stroke="#000" />
                <path d="M1898 234v13M1898 272v35" stroke="#fff" />
                <path d="M1784 275l13 14" stroke="#d09868" strokeWidth="3" />
                <path d="M1807 290h24v7h-24z" stroke="#806040" strokeDasharray="4 3" />
                <path d="M1851 276h27v18M1864 276v18M1878 274h17M1835 277v16h58V256h-14" stroke="#a09a5c" />
                <path d="M1851 274.500h-19v21.500h64V254h-17v21" stroke="#a09a5c" strokeWidth="2" />
            </svg>
        </div>
    );
}

function Field({ label, initial, pad }) {
    const [value, setValue] = useState(initial);
    const id = label.toLowerCase().replace(" ", "-");
    return (
        <div className="flex h-[27px] items-start">
            <label htmlFor={id} className="w-[51px] shrink-0 pt-1 whitespace-nowrap">{label}</label>
            <div className="flex h-[23px] w-[113px] border border-[#a8a8a8] bg-white">
                <input id={id} value={value} onChange={(e) => setValue(e.target.value)} className={`mb-1 min-w-0 flex-1 outline-none ${pad ? "pl-[5px]" : "pl-[2px]"}`} />
                <div className="flex w-4 flex-col gap-[1px]">
                    {["M0 5h6L3 2z", "M0 2h6L3 5z"].map((d, i) => (
                        <button type="button" key={d} aria-label={`${i ? "Decrease" : "Increase"} ${label}`} className="flex flex-1 items-center justify-center border border-[#b4b4b4] bg-[#f0f0f0]"><svg className="size-[6px]" viewBox="0 0 6 6"><path d={d} fill="#5068a8" /></svg></button>
                    ))}
                </div>
            </div>
        </div>
    );
}

function View3D() {
    return (
        <aside className="flex shrink-0 pl-[6px]">
            <div className={`${strip} mr-[2px]`}>
                <StripButtons right />
                <SideTab icon="insert" label="Insertion" className="mt-1 h-[82px]" />
                <SideTab icon="house3d" label="3D View" active className="h-[79px]" />
                <SideTab icon="filterBw" label="Display Filter" className="h-[104px]" />
                <SideTab icon="globe" label="Internet" className="h-[78px]" />
            </div>
            <div className="w-[202px] border-t border-l-2 border-[#808080] font-['Liberation_Sans',sans-serif] text-[11px]">
                <div className="flex h-[79px] justify-between">
                    <button type="button" aria-label="Walk" className={`flex h-12 w-[112px] items-center justify-center ${raised}`}>
                        <Svg size="size-7" box="0 0 28 28">
                            <path d="M4 13c3-4 10-2 9 3-1 3-2 5-1 7 0 5-5 5-6 1 0-4-3-7-2-11zM25 7c-4-3-10 0-9 5 2 4 1 6 1 8 1 5 6 4 6 0 0-4 4-9 2-13z" fill="#1c1c1c" />
                            <circle cx="12" cy="8" r="2" fill="#111" /><path d="M3 10l6-3M25 5l-6-3" stroke="#111" strokeWidth="2" strokeDasharray="2 1" /><circle cx="16" cy="3" r="2" fill="#111" />
                        </Svg>
                    </button>
                    <div className="grid grid-cols-3 grid-rows-3">
                        {[[0, 1], [0, 0], [90, 1], [270, 0], null, [90, 0], [270, 1], [180, 0], [180, 1]].map((a, i) =>
                            a ? <button type="button" key={i} aria-label={`Move ${i + 1}`} className={`flex size-[26px] items-center justify-center ${raised}`}><Arrow angle={a[0]} diag={a[1]} /></button> : <span key={i} />
                        )}
                    </div>
                </div>
                <MiniPlan />
                <div className="mt-[5px] flex h-[104px]">
                    <div className="grid shrink-0 grid-cols-3">
                        {viewTools.map(([name, art]) => (
                            <button type="button" key={name} aria-label={name} className={`flex size-[26px] items-center justify-center bg-[#c4c4c4] ${raised}`}><Svg size="size-5" box="0 0 18 18">{art}</Svg></button>
                        ))}
                    </div>
                    <div className="ml-[2px] flex-1 border-t border-l border-[#909090] bg-[#c0c0c0]">
                        <svg className="size-full" viewBox="1800 332 119 104" fill="none" stroke="#111">
                            <path d="M1855 363h12v40c0 6-5 9-9 10h-3z" fill="#3a3a98" /><path d="M1836 364h20v49h-18l-3-3v-44z" fill="#b8b8b8" />
                            <path d="M1837 357h12l-2 6h-8zM1838 414h13v8h-13z" fill="#b0b0b0" /><path d="M1839 367h4v43h-4z" fill="#3a3a98" />
                            <path d="M1852 370h9v37h-9z" fill="#a8a8a8" /><path d="M1854 372h5v8h-5zM1854 393h5v12h-5z" fill="#444" />
                            <path d="M1862 357h5v10h-5zM1854 384h13v7h-13z" fill="#a0a0a0" />
                            <path d="M1860 388l-21 48M1860 388v48M1860 388l22 48" strokeWidth="2" />
                            <path d="M1858 386h4v4h-4z" fill="#f00" stroke="#f00" /><circle cx="1865" cy="352" r="6" fill="#fff" stroke="#e03030" />
                        </svg>
                    </div>
                </div>
                <form className="pt-1 pl-3" onSubmit={(e) => e.preventDefault()}>
                    <Field label="Angle" initial="90" />
                    <Field label="Tilt Angle" initial="0,0" pad />
                    <Field label="Height" initial="7,99" />
                    <Field label="Rotate" initial="0" />
                    <button type="submit" className="mt-[1px] ml-[51px] h-[21px] w-28 rounded-[3px] border border-[#707070] bg-linear-to-b from-[#f4f4f4] to-[#d0d0d0]">Reset</button>
                </form>
            </div>
        </aside>
    );
}

// Raccourcis de la barre des tâches (grille 32 x 32)
const apps = [
    ["Firefox", 1, <><circle cx="16" cy="16" r="14" fill="#2a6cc0" /><path d="M20 3c8 4 10 12 8 18-2 5-8 9-13 9C6 30 1 23 2 15c1-4 2-6 4-8l1 3 6-1c-2 2-2 4-1 5l4 1c-1 3-5 3-5 6 3 4 9 3 11-1 3-6 1-12-2-17z" fill="#e8711c" /><path d="M22 4c6 5 8 12 5 18 1-7-1-13-5-18z" fill="#ffd23c" /></>],
    ["Explorer", 1, <><path d="M3 7h9l2-3h9l1 3h5v22H3z" fill="#f4dc90" stroke="#c8a850" /><path d="M4 5h5M13 5h5M22 6h4" stroke="#3a9c4c" strokeWidth="2" /><path d="M7 30V19h19v11h-5v-6h-9v6z" fill="#8cd0f0" stroke="#4898c8" /></>],
    ["Media Player", 0, <><path d="M9 4h20v23H9z" fill="#4a94cc" /><path d="M4 6h20v22H4z" fill="#8cc4e8" stroke="#5a9cc8" /><circle cx="14" cy="17" r="9" fill="#f07c1c" stroke="#fff" /><path d="M11 11v12l9-6z" fill="#fff" /></>],
    ["Terrier", 0, <><path d="M4 14l3-9 6-2 5 2 5-1 3 7 5 5-2 9-6 4H9l-5-5 2-7z" fill="#d4d8dc" stroke="#8c9298" /><path d="M8 13l8-1 2 10-6 5-5-3z" fill="#5c646c" /><circle cx="20" cy="11" r="2" fill="#222" /><path d="M19 17c3 3 6 2 8 0" stroke="#444" strokeWidth="2" /></>],
    ["AIMP", 0, <><circle cx="16" cy="16" r="13" fill="#f09a14" stroke="#1c1c1c" strokeWidth="3" /><path d="M16 7l8 15h-5l-3-2-3 2H8zM16 13l-3 6h6z" fill="#222" fillRule="evenodd" /></>],
    ["Camera", 1, <><path d="M1 9h7l3-5h10l3 5h7v19H1z" fill="#30343a" stroke="#6c7076" /><path d="M1 12h6v14H1z" fill="#4c5258" /><circle cx="18" cy="18" r="9" fill="#14181c" stroke="#9aa0a6" /><circle cx="18" cy="18" r="5" fill="#3c9cb4" /><circle cx="16" cy="16" r="2" fill="#c8f08c" /></>],
    ["Chrome", 0, <><circle cx="16" cy="16" r="14" fill="#fbc116" /><path d="M16 16L3 10C8 0 24-1 29 10H16z" fill="#e33b2e" /><path d="M16 16l-4 6 3 8C3 29-1 18 4 9l6 9z" fill="#2ba24c" /><circle cx="16" cy="16" r="6.500" fill="#3c80e8" stroke="#fff" strokeWidth="2" /></>],
    ["Splash", 1, <><circle cx="16" cy="16" r="14" fill="#dfe4ea" stroke="#9aa4b0" strokeWidth="2" /><path d="M14 7c5 0 5 5 3 8 3-3 7-3 7 0s-5 2-6 2c3 1 6 5 3 6s-5-3-5-6c-1 4-6 8-9 5s3-5 8-6c-3-1-4-8-1-9z" fill="#1c5ce0" /></>],
    ["uTorrent", 1, <><circle cx="16" cy="16" r="15" fill="#6cb848" /><path d="M10 8l-1 9c0 6 6 6 8 1l1-10M9 17l2 12M17 16c0 6 4 7 7 4" stroke="#fff" strokeWidth="4" /></>],
    ["Viber", 1, <><path d="M16 2c10 0 13 3 13 12s-4 12-12 12l-6 6v-7C5 24 2 21 2 14 2 5 6 2 16 2z" fill="#7c529c" stroke="#fff" strokeWidth="2" /><path d="M10 8l3 4-1 3c1 3 3 4 5 5l2-2 4 3c-1 4-4 3-7 2-5-3-9-8-9-12z" fill="#fff" /><path d="M17 7c4 1 6 3 6 7M17 11c2 0 2 1 3 3" stroke="#fff" /></>],
    ["Connect", 1, <><circle cx="16" cy="16" r="15" fill="#3c5c74" /><path d="M3 9c4 8 8 8 10 9l-5 11h4l5-8 5 9h5l-7-12c3-2 8-5 9-10-4 4-8 6-14 6S7 12 3 9z" fill="#5cc0f4" /><circle cx="17" cy="7" r="5" fill="#d8e4ec" stroke="#233" /></>],
    ["Notepad", 1, <><path d="M11 4l19 2-4 22-21-3z" fill="#e8e4d0" /><path d="M10 3l18 2-6 22L2 24z" fill="#7cc4cc" stroke="#4a98a4" /><path d="M11 3l18 2" stroke="#ddd" strokeWidth="3" strokeDasharray="2 1" /></>],
    ["Bitdefender", 1, <><rect width="32" height="32" rx="3" fill="#d80808" /><text x="9" y="25" fontSize="25" fontWeight="bold" fill="#fff" fontFamily="Liberation Serif">B</text></>],
    ["foobar2000", 1, <><path d="M6 1l5 8h10l5-8 2 17-5 6-7 7-7-7-5-6z" fill="#fff" stroke="#222" /><path d="M7 14l7 6-3 3-4-3zM25 14l-7 6 3 3 4-3z" fill="#000" /><path d="M13 27l3-2 3 2" stroke="#000" /></>],
    ["FloorPlan 3D", 2, <><circle cx="16" cy="16" r="14" fill="#1460b4" stroke="#0c4488" /><path d="M7 14l9-7 9 7zM9 14v9h14v-9M9 18h14M14 14v9M19 14v9" stroke="#fff" /></>],
    ["Calculator", 1, <><path d="M5 2h22v28H5z" fill="#cfe4f4" stroke="#8cb0cc" /><path d="M8 5h16v7H8z" fill="#e4ecc8" stroke="#788" /><path d="M8 17h16M8 21h16M8 25h12" stroke="#6c94b4" strokeWidth="2" strokeDasharray="3 1" /><path d="M21 23h3v5h-3z" fill="#f09c1c" /></>],
    ["Paint", 1, <><path d="M2 18C2 9 12 5 20 8s9 10 5 13-7 0-9 3-2 5-7 4-7-5-7-10z" fill="#d0e4f4" stroke="#8cacc8" /><circle cx="8" cy="18" r="3" fill="#d84434" /><circle cx="12" cy="12" r="3" fill="#54b044" /><circle cx="19" cy="12" r="3" fill="#f0c028" /><path d="M27 8l-9 20" stroke="#e08c34" strokeWidth="3" /><path d="M24 2l6 1-1 7-5-2z" fill="#a8703c" /></>],
];

function Taskbar() {
    const look = [
        "border-transparent",
        "border-[#7f97bd] bg-linear-to-br from-[#7f93b5] via-[#2f4f85] via-40% to-[#1a3a74]",
        "border-[#c8d4e8] bg-linear-to-br from-[#c8d2e4] via-[#8b9dc2] via-50% to-[#7087b4]",
    ];
    return (
        <footer className="flex h-[39px] shrink-0 items-center border-t border-[#5a78a8] bg-linear-to-r from-[#03276a] via-[#042a6c] to-[#021b46] text-[12px] text-white">
            <button type="button" aria-label="Start" className="flex w-[60px] shrink-0 justify-center pr-[6px]">
                <svg className="size-9" viewBox="0 0 36 36">
                    <defs><radialGradient id="orb" cx=".5" cy=".9" r=".9"><stop offset="0" stopColor="#3cd0f4" /><stop offset=".5" stopColor="#1c5c9c" /><stop offset="1" stopColor="#a8bccc" /></radialGradient></defs>
                    <circle cx="18" cy="18" r="17" fill="url(#orb)" stroke="#8ca8c4" />
                    <path d="M10 9c3-2 5-2 8 0l-2 8c-3-2-5-2-8 0z" fill="#f0642c" /><path d="M19 10c3 2 6 2 9 0l-2 8c-3 2-6 1-9 0z" fill="#8cc43c" />
                    <path d="M8 19c3-2 5-2 8 0l-2 7c-3-2-5-2-8 0z" fill="#3c9ce4" /><path d="M17 19c3 2 6 2 9 0l-2 7c-3 2-6 2-9 0z" fill="#fcc82c" />
                </svg>
            </button>
            <div className="flex h-full gap-1">
                {apps.map(([name, state, art]) => (
                    <button type="button" key={name} aria-label={name} className={`flex h-full w-[58px] items-center justify-center rounded-xs border ${look[state]}`}>
                        <Svg size="size-8" box="0 0 32 32">{art}</Svg>
                    </button>
                ))}
            </div>
            <div className="ml-auto flex h-full items-center">
                <span className="mr-4 mb-1">RU</span>
                <button type="button" aria-label="Hidden icons" className="mr-[13px]"><svg className="h-1 w-[7px]" viewBox="0 0 7 4"><path d="M0 4h7L3.500 0z" fill="#fff" /></svg></button>
                <Svg className="mr-2"><path d="M2 1v14" stroke="#fff" /><path d="M4 2h9v7H4z" fill="#fff" /><circle cx="11" cy="11" r="5" fill="#d83020" /><path d="M9 9l4 4M13 9l-4 4" stroke="#fff" strokeWidth="2" /></Svg>
                <Svg className="mr-2"><path d="M1 5h3l4-4v14l-4-4H1z" fill="#fff" /><path d="M10 5c1 2 1 4 0 6M13 3c2 3 2 7 0 10" stroke="#fff" /></Svg>
                <Svg className="mr-[15px]"><path d="M5 4h10v8H5zM7 15h7M1 1v4h4V1M3 5v9h3" stroke="#fff" strokeWidth="2" /></Svg>
                <div className="w-[60px] text-center text-[12px] leading-[17px]"><div>23:18</div><div>25.02.2015</div></div>
                <button type="button" aria-label="Show desktop" className="mr-[1px] ml-2 h-full w-[14px] border border-[#5b76a4] bg-linear-to-br from-[#7b8fae] to-[#0a2350]" />
            </div>
        </footer>
    );
}

export default function App() {
    return (
        <div className="flex h-screen w-full flex-col overflow-hidden bg-[#f0f0f0] font-['Open_Sans','Noto_Sans',sans-serif] text-black">
            <TitleBar />
            <MenuBar />

            {/* Barres d'outils */}
            <div className="flex h-8 shrink-0 border-t border-white pl-[2px]">
                <ToolGroup items="new open save | print | copy paste | undo redo | help" className="w-60 border-b border-l pl-1" />
                <ToolGroup items="zoomG zoomG zoomWin panG zoomPrev zoomAll | hand" className="ml-[117px] w-[171px] border-b border-l pl-1" />
                <ToolGroup items="level dim | textA | ruler list plane" className="ml-[81px] w-[157px] border-b border-l pl-1" />
                <ToolGroup items="grid* | find findNext" className="ml-20 w-[83px] border-b border-l pl-1" />
                <ToolGroup items="alL alR | alT alB | ceV ceH | exT exM exB" className="w-[230px] border-b pl-[2px]" />
            </div>
            <div className="flex h-8 shrink-0 pl-[3px]">
                <div className="flex w-[164px] items-center border-r border-[#a0a0a0]">
                    <Combo label="Active floor" value="Ground floor" className="h-6 w-40 font-['Liberation_Sans',sans-serif] text-[13px] font-bold" />
                </div>
                <ToolGroup items="cursor* door door2 window shape stairs rail column roof tripod cabinet chair floor lamp fire bush stair2 sign bed fence gate terrain" className="ml-[84px] w-[493px] border-l pl-1" />
                <ToolGroup items="insert house* filter brush* globe props*" className="ml-[60px] w-[141px] border-l pl-1" />
            </div>

            <div className="flex min-h-0 flex-1">
                <div className="mr-[6px] flex w-[230px] shrink-0 flex-col border-t border-[#a0a0a0]">
                    <PropertiesPanel />
                    <DrawingInfo />
                </div>
                <Viewport />
                <View3D />
            </div>

            <div className="flex h-9 shrink-0 items-center border-y border-[#a0a0a0] pl-[3px]">
                <div className="flex h-full w-[88px] items-center border-r border-[#a0a0a0]">
                    <Tool name="level" wide />
                    <Tool name="dim" wide />
                </div>
            </div>
            <div className="mt-[2px] flex h-[19px] shrink-0 items-center bg-[#f0eceb] pl-[2px] text-[12px] leading-4">
                <span>Ready</span>
                <span className="mr-[35px] ml-auto border-x border-[#d0d0d0] px-1">NUM</span>
            </div>
            <Taskbar />
        </div>
    );
}
